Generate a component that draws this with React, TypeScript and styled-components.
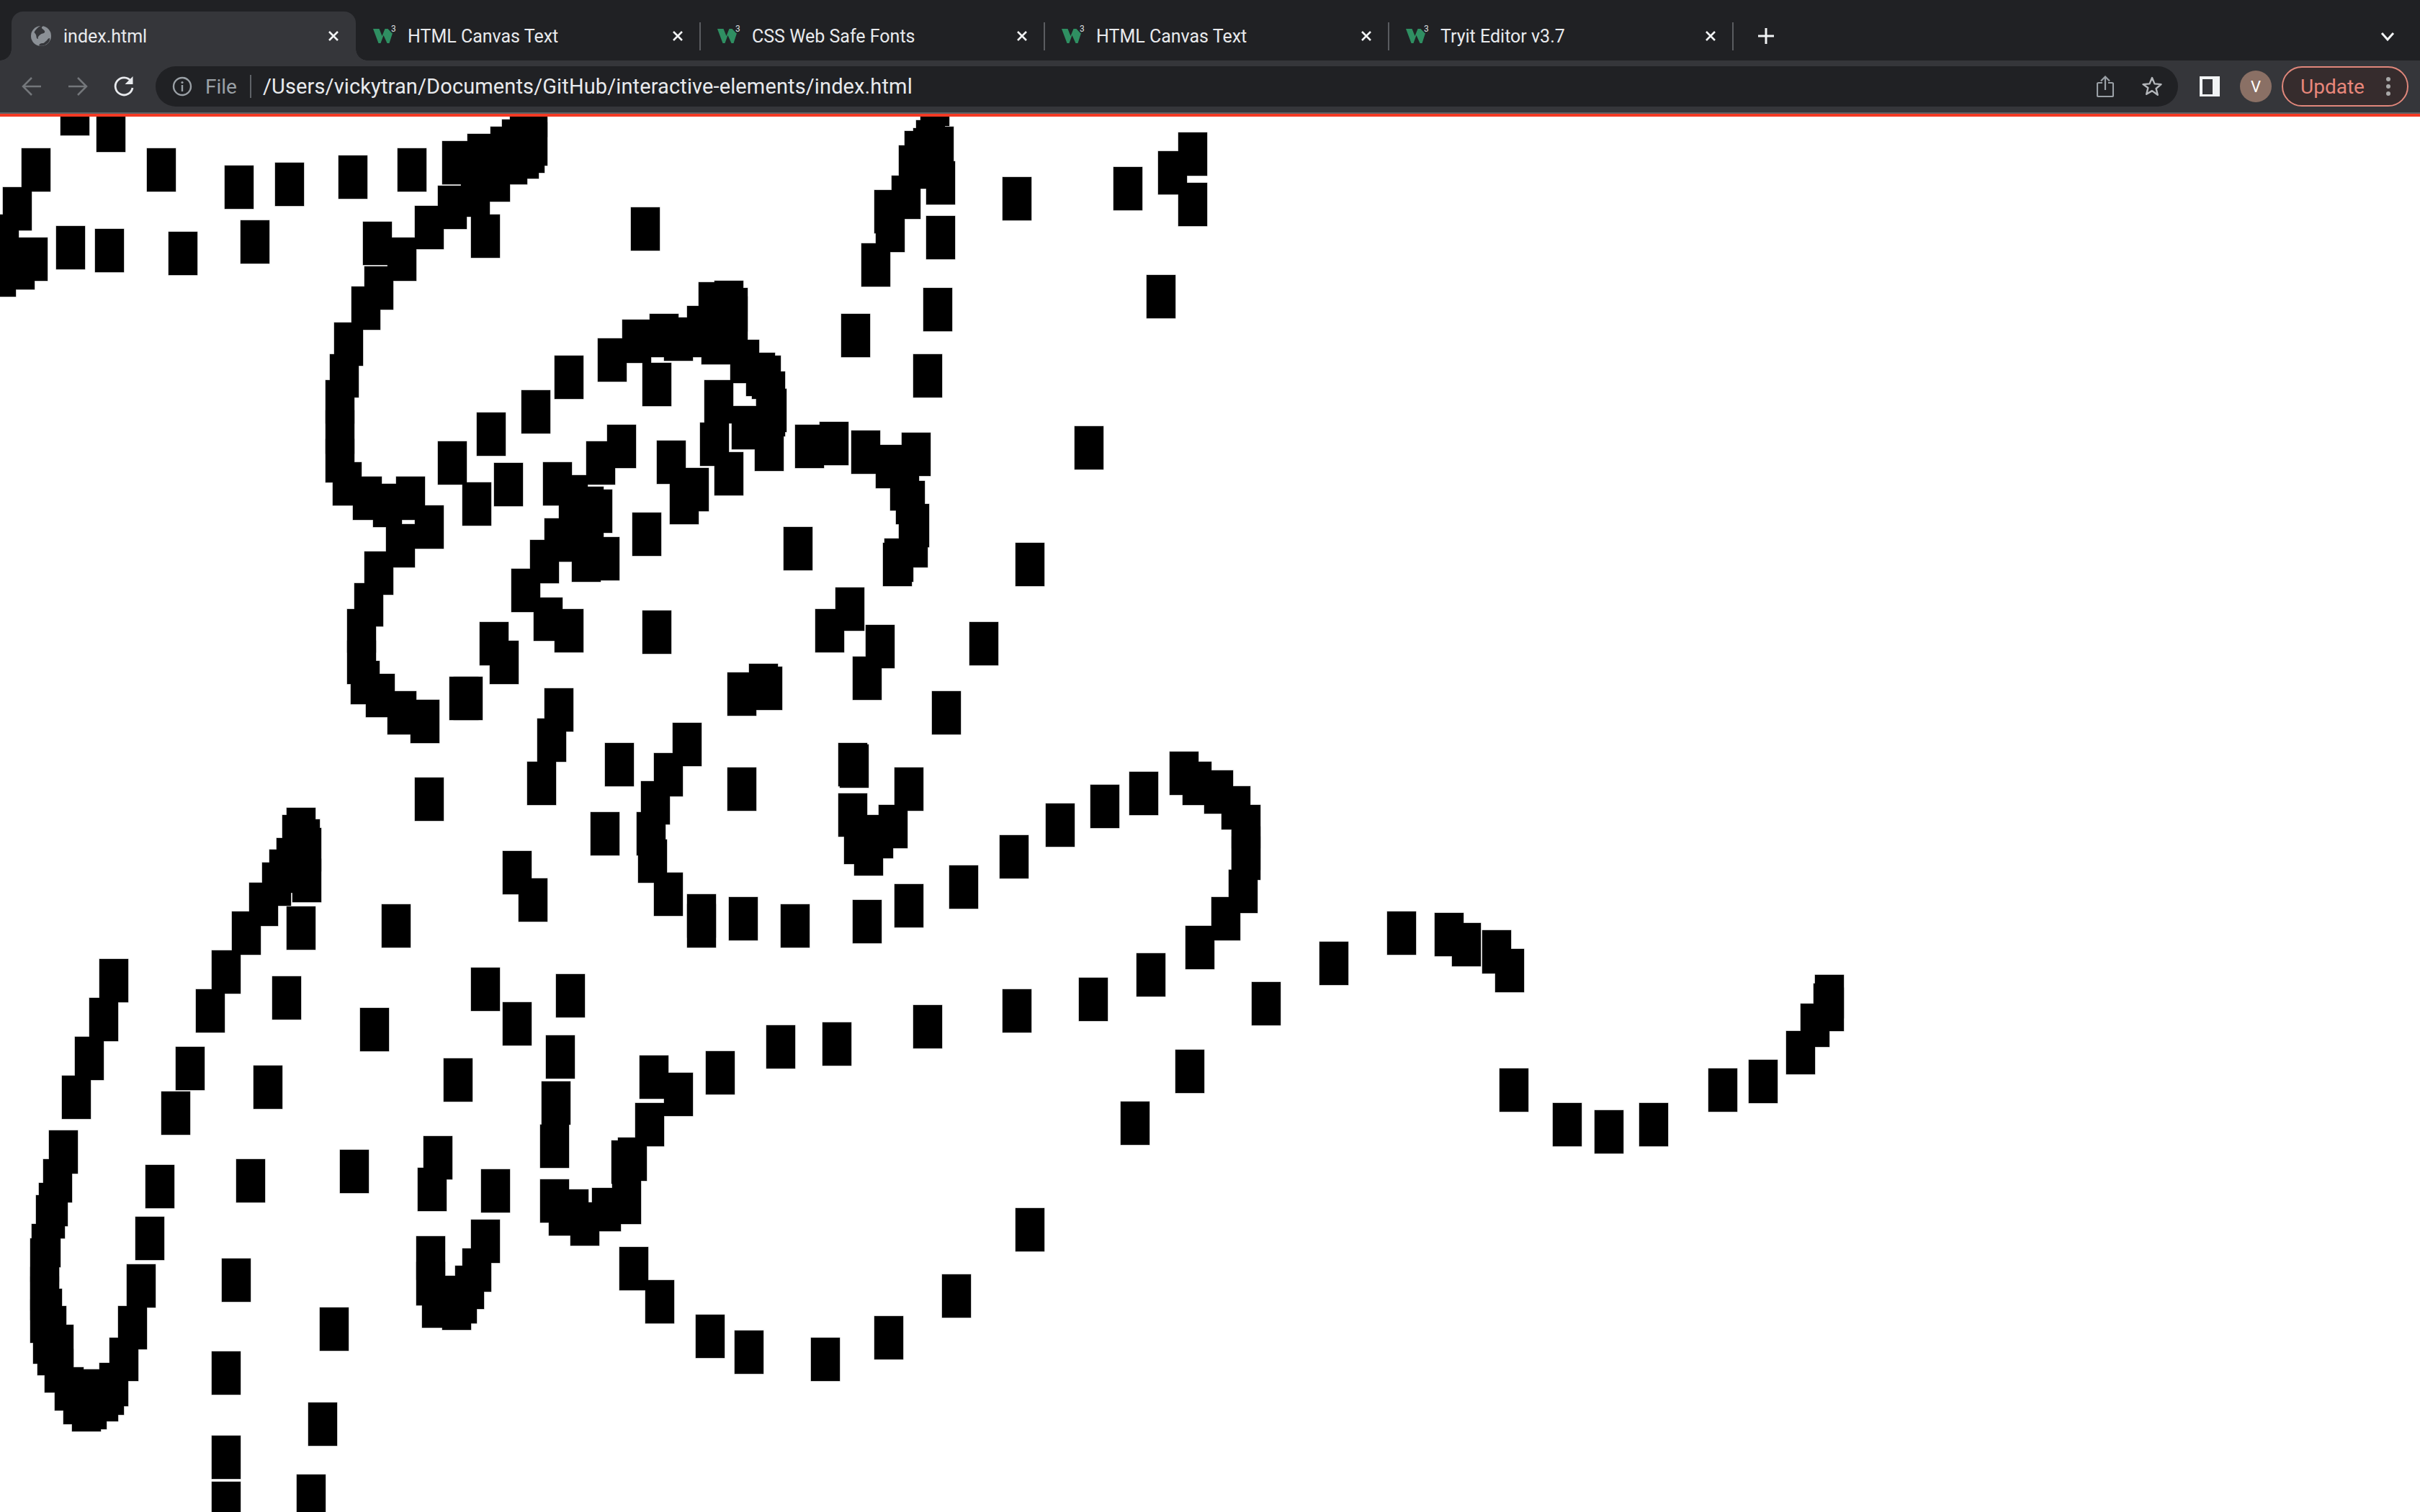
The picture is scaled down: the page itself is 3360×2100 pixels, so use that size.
import React from "react";
import styled, { createGlobalStyle } from "styled-components";

const Global = createGlobalStyle`
  html, body { margin: 0; padding: 0; background: #fff; overflow: hidden; }
  body { font-family: "Roboto", "Liberation Sans", sans-serif; }
`;

const Page = styled.div`
  width: 3360px;
  height: 2100px;
  display: flex;
  flex-direction: column;
  overflow: hidden;
`;

const TabStrip = styled.div`
  height: 84px;
  box-sizing: border-box;
  padding: 16px 0 0 16px;
  background: #202124;
  display: flex;
  align-items: stretch;
  flex: none;
`;

const Tab = styled.div<{ $active?: boolean; $sep?: boolean }>`
  position: relative;
  width: 478px;
  box-sizing: border-box;
  padding: 0 21px 0 ${(p) => (p.$active ? 26 : 24)}px;
  display: flex;
  align-items: center;
  border-radius: 16px 16px 0 0;
  background: ${(p) => (p.$active ? "#35363a" : "transparent")};
  ${(p) =>
    p.$sep
      ? `&::after { content: ""; position: absolute; right: -1px; top: 15px; bottom: 14px; width: 2px; background: #5a5c60; }`
      : ""}
  ${(p) =>
    p.$active
      ? `&::before { content: ""; position: absolute; left: -16px; bottom: 0; width: 16px; height: 16px; background: radial-gradient(circle at 0 0, #202124 15.5px, #35363a 16px); }
         &::after { content: ""; position: absolute; right: -16px; bottom: 0; width: 16px; height: 16px; background: radial-gradient(circle at 100% 0, #202124 15.5px, #35363a 16px); }`
      : ""}
`;

const Favicon = styled.span<{ $active?: boolean }>`
  width: 34px;
  margin-right: ${(p) => (p.$active ? 12 : 14)}px;
  flex: none;
  display: flex;
  align-items: center;
  position: relative;
  height: 32px;
`;

const Sup = styled.span`
  position: absolute;
  left: 25px;
  top: -1px;
  font-size: 12px;
  line-height: 14px;
  color: #d8dadc;
`;

const Title = styled.span`
  flex: 1;
  font-size: 25px;
  color: #e8eaed;
  white-space: nowrap;
`;

const Close = styled.svg`
  width: 20px;
  height: 20px;
  flex: none;
`;

const NewTab = styled.svg`
  width: 24px;
  height: 24px;
  margin: 22px 0 0 34px;
  flex: none;
`;

const Chevron = styled.svg`
  width: 20px;
  height: 14px;
  margin: 28px 35px 0 auto;
  flex: none;
`;

const Toolbar = styled.div`
  height: 72px;
  flex: none;
  background: #35363a;
  padding: 0 16px 0 12px;
  display: flex;
  align-items: center;
  box-sizing: border-box;
`;

const NavButton = styled.span`
  width: 64px;
  height: 56px;
  display: flex;
  align-items: center;
  justify-content: center;
  flex: none;
`;

const Omnibox = styled.div`
  flex: 1;
  height: 56px;
  margin-left: 12px;
  background: #202124;
  border-radius: 28px;
  display: flex;
  align-items: center;
  padding: 0 21px 0 23px;
`;

const Origin = styled.span`
  font-size: 28px;
  color: #9aa0a6;
  margin-left: 18px;
`;

const UrlDivider = styled.span`
  width: 2px;
  height: 32px;
  background: #5f6368;
  margin: 0 16px 0 18px;
  flex: none;
`;

const Url = styled.span`
  flex: 1;
  font-size: 29px;
  letter-spacing: 0.12px;
  color: #e8eaed;
  white-space: nowrap;
`;

const OmniIcon = styled.svg<{ $gap?: number }>`
  flex: none;
  margin-left: ${(p) => p.$gap ?? 0}px;
`;

const PanelIcon = styled.svg`
  width: 28px;
  height: 28px;
  margin: 0 28px 0 30px;
  flex: none;
`;

const Avatar = styled.span`
  width: 44px;
  height: 44px;
  border-radius: 50%;
  background: #8a7065;
  color: #fff;
  font-size: 22px;
  display: flex;
  align-items: center;
  justify-content: center;
  flex: none;
`;

const UpdateButton = styled.div`
  width: 176px;
  height: 56px;
  margin-left: 14px;
  box-sizing: border-box;
  border: 2px solid #e0877b;
  border-radius: 28px;
  background: #362c2d;
  display: flex;
  align-items: center;
  padding: 0 23px 0 24px;
  flex: none;
`;

const UpdateLabel = styled.span`
  flex: 1;
  font-size: 28px;
  color: #e8877b;
`;

const Dots = styled.span`
  display: flex;
  flex-direction: column;
  gap: 4px;
`;

const Dot = styled.i`
  width: 6px;
  height: 6px;
  border-radius: 50%;
  background: #a8a8a8;
  display: block;
`;

const LoadingLine = styled.div`
  height: 6px;
  flex: none;
  box-sizing: border-box;
  background: #f33a24;
  border-top: 2px solid #606165;
`;

const Canvas = styled.svg`
  display: block;
  width: 3360px;
  height: 1938px;
  flex: none;
  background: #fff;
`;

const pts: number[] = [
  84,128, 134,151, 30,206, 4,260, -14,298, 26,330, 8,342, -18,352, 204,206, 312,230, 382,226, 470,216, 552,206, 78,314, 132,318, 234,322, 334,306,
  614,196, 649,186, 681,176, 697,166, 708,150, 720,130, 720,170, 716,180, 708,188, 692,196, 668,220, 640,241, 608,258, 576,286, 654,298, 538,330, 504,308, 506,370, 488,398, 464,448, 458,492, 452,528, 452,570, 452,610, 462,642, 490,662, 518,672, 550,662, 576,702, 536,728, 506,766, 492,810, 482,846, 482,890, 487,918, 508,936, 538,960, 570,972, 624,940, 630,940,
  608,613, 642,670, 662,573, 686,643, 754,642, 814,613, 843,590, 776,660, 798,676, 810,680, 798,700, 756,720, 776,720, 736,750, 710,790, 794,748, 820,746, 741,830, 770,846, 892,848,
  724,542, 770,494, 830,470, 864,444, 876,288,
  902,436, 954,425, 970,392, 992,390, 998,400, 998,412, 922,441, 955,436, 974,446, 1014,472, 1036,490, 1044,494, 1050,516, 1052,540, 1050,546, 1048,594, 1016,564, 978,528, 972,587, 992,628, 892,504,
  912,612, 944,650, 930,668, 1104,590, 1138,586, 1182,598, 1252,601, 1216,618, 1236,649, 1244,668, 1250,700, 1248,728, 1228,748, 1226,754, 878,712, 1088,732,
  1278,115, 1272,167, 1268,178, 1256,182, 1248,202, 1238,244, 1214,264, 1216,290, 1196,338, 1284,176, 1286,224, 1286,300, 1392,246, 1546,232, 1608,210, 1636,184, 1636,254, 1592,382, 1282,400, 1168,436, 1268,492, 1492,592, 1410,754,
  1160,816, 1132,846, 1202,868, 1184,912, 1346,864, 1294,960, 1010,934, 1040,922, 1046,926, 666,864, 680,890, 756,956, 746,998, 732,1058,
  840,1032, 934,1004, 908,1046, 890,1085, 884,1128, 886,1166, 908,1212, 820,1128, 1010,1066, 1164,1032, 1166,1034, 1164,1102, 1242,1066, 1220,1118, 1200,1132, 1172,1140, 1186,1156, 576,1080,
  954,1242, 954,1256, 1012,1246, 1084,1256, 1184,1250, 1242,1228, 1318,1202, 1388,1160, 1452,1116, 1514,1090, 1568,1072, 1624,1044, 1642,1058, 1672,1070, 1696,1092, 1710,1118, 1710,1148, 1710,1162, 1706,1208, 1682,1246, 1646,1286,
  1578,1324, 1498,1358, 1392,1374, 1268,1396, 1142,1420, 1064,1424, 980,1460, 1738,1364, 1832,1308, 1926,1266, 1992,1268, 2016,1282, 2058,1292, 2076,1318, 1632,1458, 1556,1530, 1410,1678, 1308,1770, 1214,1828, 1126,1858, 1020,1848, 966,1826, 896,1778, 860,1732,
  2082,1484, 2156,1532, 2214,1542, 2276,1532, 2372,1484, 2428,1472, 2480,1432, 2500,1394, 2518,1366, 2520,1354, 2520,1372,
  698,1182, 720,1220, 530,1256, 654,1344, 698,1392, 772,1353, 758,1438, 752,1502, 750,1562, 750,1638, 762,1656, 792,1670, 777,1652, 822,1650, 850,1640, 849,1584, 858,1580, 882,1532, 888,1466, 922,1490,
  378,1356, 500,1400, 352,1480, 616,1470, 472,1597, 328,1610, 668,1624, 588,1578, 580,1622, 244,1454, 224,1516, 202,1618, 188,1690, 176,1756, 308,1748, 444,1816, 294,1877, 294,1994, 294,2058, 428,1948, 412,2048,
  578,1717, 578,1753, 586,1784, 614,1787, 654,1694, 642,1734, 632,1758, 622,1778, 592,1772,
  138,1332, 124,1386, 104,1440, 86,1494, 68,1570, 60,1610, 54,1643, 50,1660, 44,1700, 42,1720, 42,1760, 42,1805, 42,1773, 46,1790, 46,1834, 52,1814, 52,1850, 62,1840, 62,1874, 76,1899, 88,1918, 100,1928, 108,1925, 124,1914, 132,1905, 138,1893, 152,1858, 164,1814, 100,1902, 116,1902,
  272,1374, 294,1320, 322,1266, 346,1226, 364,1198, 374,1180, 384,1164, 392,1132, 398,1122, 404,1138, 406,1150, 406,1193, 398,1259,
];

const marks: [number, number][] = [];
for (let i = 0; i < pts.length; i += 2) marks.push([pts[i], pts[i + 1]]);

const Globe = () => (
  <svg width="30" height="30" viewBox="0 0 30 30">
    <circle cx="15" cy="15" r="14" fill="#8b9096" />
    <path d="M8 20c-1-3 1-4 3-6s5-1 6-3-1-3-3-5c-2-1-1-3 1-4l-3-.5C9 3 4 7 2.5 11c2 2 3 4 3 6s1 3 2.500 3z" fill="#35363a" transform="translate(3 -1)" />
    <path d="M12 28c1-2 2-3 5-3s3-2 5-3 2-4 5-4c0 0 .5 3-1 5s-5 5-8 5.500-6 0-6-.5z" fill="#35363a" />
  </svg>
);

const W3 = () => (
  <>
    <svg width="30" height="22" viewBox="0 0 30 22">
      <path d="M0 1h8.500l4 10 4-10h4l6 6.500L29 1l-6.500 20h-3L14.500 10l-4 11h-3z" fill="#2f8f62" />
    </svg>
    <Sup>3</Sup>
  </>
);

const CloseIcon = () => (
  <Close viewBox="0 0 20 20">
    <path d="M4 4l12 12M16 4L4 16" stroke="#f1f3f4" strokeWidth="2.600" fill="none" />
  </Close>
);

const tabs = [
  { title: "index.html", active: true },
  { title: "HTML Canvas Text" },
  { title: "CSS Web Safe Fonts" },
  { title: "HTML Canvas Text" },
  { title: "Tryit Editor v3.7" },
];

export default function App() {
  return (
    <Page>
      <Global />
      <TabStrip>
        {tabs.map((t, i) => (
          <Tab key={i} $active={t.active} $sep={i > 0}>
            <Favicon $active={t.active}>{t.active ? <Globe /> : <W3 />}</Favicon>
            <Title>{t.title}</Title>
            <CloseIcon />
          </Tab>
        ))}
        <NewTab viewBox="0 0 24 24">
          <path d="M12 1v22M1 12h22" stroke="#f1f3f4" strokeWidth="3" fill="none" />
        </NewTab>
        <Chevron viewBox="0 0 20 14">
          <path d="M2 2l8 9 8-9" stroke="#f1f3f4" strokeWidth="3" fill="none" />
        </Chevron>
      </TabStrip>
      <Toolbar>
        <NavButton>
          <svg width="28" height="28" viewBox="0 0 28 28">
            <path d="M27 14H2M14 2L2 14l12 12" stroke="#74777b" strokeWidth="2.500" fill="none" />
          </svg>
        </NavButton>
        <NavButton>
          <svg width="28" height="28" viewBox="0 0 28 28">
            <path d="M1 14h25M14 2l12 12-12 12" stroke="#74777b" strokeWidth="2.500" fill="none" />
          </svg>
        </NavButton>
        <NavButton>
          <svg width="30" height="30" viewBox="0 0 30 30">
            <path d="M25 8a12 12 0 1 0 2 9" stroke="#e8eaed" strokeWidth="2.800" fill="none" />
            <path d="M27.500 1v11h-11z" fill="#e8eaed" />
          </svg>
        </NavButton>
        <Omnibox>
          <svg width="28" height="28" viewBox="0 0 28 28">
            <circle cx="14" cy="14" r="12" stroke="#9aa0a6" strokeWidth="2.400" fill="none" />
            <path d="M14 12v9" stroke="#9aa0a6" strokeWidth="2.400" />
            <circle cx="14" cy="8.500" r="1.600" fill="#9aa0a6" />
          </svg>
          <Origin>File</Origin>
          <UrlDivider />
          <Url>/Users/vickytran/Documents/GitHub/interactive-elements/index.html</Url>
          <OmniIcon width="24" height="30" viewBox="0 0 24 30">
            <path d="M8 10H2.500a1.500 1.500 0 0 0-1.500 1.500v16A1.500 1.500 0 0 0 2.500 29h19a1.500 1.500 0 0 0 1.500-1.500v-16a1.500 1.500 0 0 0-1.500-1.500H16" stroke="#9aa0a6" strokeWidth="2.200" fill="none" />
            <path d="M12 20V2M6 7.500L12 1.500l6 6" stroke="#9aa0a6" strokeWidth="2.200" fill="none" />
          </OmniIcon>
          <OmniIcon $gap={38} width="30" height="30" viewBox="0 0 30 30">
            <path d="M15 3l3.500 8.400 9 .7-6.900 5.900 2.200 8.800L15 21.100 7.200 25.800 9.400 17 2.500 12.100l9-.7z" stroke="#b4b7bb" strokeWidth="2.400" fill="none" strokeLinejoin="round" />
          </OmniIcon>
        </Omnibox>
        <PanelIcon viewBox="0 0 28 28">
          <path d="M0 0h28v28H0zM4 4v21h14V4z" fill="#f1f3f4" fillRule="evenodd" />
        </PanelIcon>
        <Avatar>V</Avatar>
        <UpdateButton>
          <UpdateLabel>Update</UpdateLabel>
          <Dots>
            <Dot />
            <Dot />
            <Dot />
          </Dots>
        </UpdateButton>
      </Toolbar>
      <LoadingLine />
      <Canvas viewBox="0 162 3360 1938">
        <g fill="#9a9a9a">
          {marks.map(([x, y], i) => (
            <rect key={i} x={x - 0.5} y={y - 0.5} width={41} height={61} />
          ))}
        </g>
        <g fill="#000">
          {marks.map(([x, y], i) => (
            <rect key={i} x={x} y={y} width={40} height={60} />
          ))}
        </g>
      </Canvas>
    </Page>
  );
}
